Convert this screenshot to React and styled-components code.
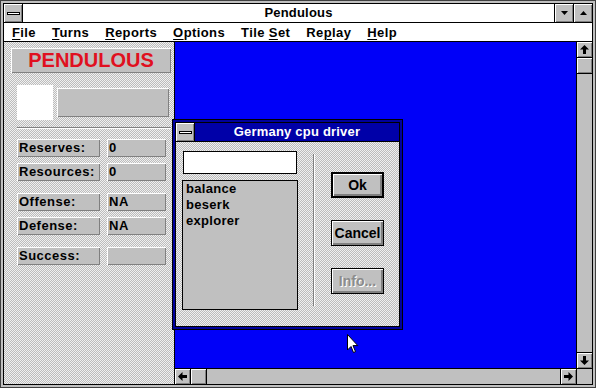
import React from 'react';
import styled, { createGlobalStyle, css } from 'styled-components';

const GlobalStyle = createGlobalStyle`
  html, body { margin: 0; padding: 0; background: #c0c0c0; }
  body { font-family: "Liberation Sans", Arial, sans-serif; }
`;

const dither = css`
  background-color: #c8c8c8;
  background-image: repeating-conic-gradient(#bcbcbc 0 25%, #f0f0f0 0 50%);
  background-size: 2px 2px;
`;

const bevel = css`
  background: #c0c0c0;
  box-shadow: inset 1px 1px #fff, inset -1px -1px #808080;
`;

// Main window
const Frame = styled.div`
  position: relative;
  box-sizing: border-box;
  width: 596px;
  height: 388px;
  border: 1px solid #404040;
  padding: 2px;
  background: #c0c0c0;
  display: flex;
  overflow: hidden;
`;

const Inner = styled.div`
  flex: 1;
  min-width: 0;
  display: flex;
  flex-direction: column;
  border: 1px solid #000;
`;

const TitleBar = styled.div`
  height: 18px;
  flex: none;
  display: flex;
  background: ${p => (p.$active ? '#0000a8' : '#fff')};
  color: ${p => (p.$active ? '#fff' : '#000')};
  border-bottom: 1px solid #000;
  font-weight: bold;
  font-size: 13px;
  letter-spacing: 0.2px;
`;

const SysBox = styled.div`
  width: 18px;
  flex: none;
  border-right: 1px solid #000;
  ${bevel};
  display: flex;
  align-items: center;
  justify-content: center;
  &::after {
    content: '';
    width: 11px;
    height: 1px;
    background: #fff;
    border: 1px solid #000;
  }
`;

const Title = styled.div`
  flex: 1;
  text-align: center;
  line-height: 18px;
  padding-left: ${p => p.$shift || 0}px;
`;

const SizeBtn = styled.div`
  width: 18px;
  flex: none;
  border-left: 1px solid #000;
  ${bevel};
  display: flex;
  align-items: center;
  justify-content: center;
`;

const MenuBar = styled.div`
  height: 18px;
  flex: none;
  display: flex;
  align-items: center;
  background: #fff;
  border-bottom: 1px solid #000;
  font-size: 13px;
  font-weight: bold;
  letter-spacing: 0.4px;
`;

const MenuItem = styled.span`
  padding: 0 8px;
  u { text-decoration-thickness: 1px; text-underline-offset: 2px; }
`;

const Client = styled.div`
  flex: 1;
  min-height: 0;
  display: flex;
`;

// Left info panel
const Panel = styled.div`
  width: 171px;
  flex: none;
  border-right: 1px solid #000;
  ${dither};
  box-sizing: border-box;
  padding: 6px 0 0 7px;
  display: flex;
  flex-direction: column;
`;

const Banner = styled.div`
  width: 160px;
  height: 25px;
  box-sizing: border-box;
  ${bevel};
  color: #e01020;
  font-weight: bold;
  font-size: 20px;
  text-align: center;
  line-height: 25px;
`;

const IconRow = styled.div`
  margin: 12px 0 0 6px;
  display: flex;
  align-items: center;
  gap: 4px;
`;

const WhiteTile = styled.div`
  width: 36px;
  height: 35px;
  background: #fff;
`;

const GrayBar = styled.div`
  width: 112px;
  height: 29px;
  ${bevel};
`;

const Etch = styled.div`
  margin: 7px 0 0 6px;
  width: 154px;
  height: 1px;
  background: #808080;
  border-bottom: 1px solid #fff;
`;

const StatRow = styled.div`
  display: flex;
  gap: 7px;
  margin: ${p => p.$top}px 0 0 6px;
`;

const StatBox = styled.div`
  width: ${p => p.$w}px;
  height: 18px;
  box-sizing: border-box;
  ${bevel};
  font-weight: bold;
  font-size: 13px;
  letter-spacing: 0.5px;
  line-height: 18px;
  padding-left: 2px;
`;

// MDI area
const Mdi = styled.div`
  flex: 1;
  min-width: 0;
  display: grid;
  grid-template-columns: 1fr 16px;
  grid-template-rows: 1fr 16px;
`;

const Desk = styled.div`
  background: #0000f8;
`;

const VScroll = styled.div`
  display: flex;
  flex-direction: column;
  background: #c0c0c0;
  border-left: 1px solid #000;
`;

const HScroll = styled.div`
  display: flex;
  background: #c0c0c0;
  border-top: 1px solid #000;
`;

const Corner = styled.div`
  background: #c0c0c0;
  border-top: 1px solid #000;
  border-left: 1px solid #000;
`;

const Track = styled.div`
  flex: 1;
  background: #c0c0c0;
`;

const ScrollBtn = styled.div`
  width: ${p => (p.$v ? 15 : 16)}px;
  height: ${p => (p.$v ? 16 : 15)}px;
  flex: none;
  box-sizing: border-box;
  ${bevel};
  border: 0 solid #000;
  ${p => css`border-${p.$edge}-width: 1px;`}
  display: flex;
  align-items: center;
  justify-content: center;
`;

// Dialog
const Dialog = styled.div`
  position: absolute;
  left: 171px;
  top: 118px;
  width: 231px;
  height: 211px;
  box-sizing: border-box;
  border: 1px solid #000;
  background: #00009c;
  padding: 2px;
  display: flex;
`;

const DialogInner = styled.div`
  flex: 1;
  display: flex;
  flex-direction: column;
  border: 1px solid #000;
`;

const DialogBody = styled.div`
  flex: 1;
  ${dither};
  display: flex;
  padding: 9px 0 0 6px;
`;

const LeftCol = styled.div`
  width: 116px;
  display: flex;
  flex-direction: column;
  gap: 6px;
`;

const TextInput = styled.div`
  margin: 0 1px;
  height: 23px;
  box-sizing: border-box;
  background: #fff;
  border: 1px solid #000;
`;

const ListBox = styled.div`
  height: 130px;
  box-sizing: border-box;
  background: #c0c0c0;
  border: 1px solid #000;
  padding: 0 3px;
  font-weight: bold;
  font-size: 13px;
  letter-spacing: 0.3px;
  line-height: 16px;
`;

const Separator = styled.div`
  margin: 3px 0 0 15px;
  width: 1px;
  height: 152px;
  background: #808080;
  border-right: 1px solid #fff;
`;

const RightCol = styled.div`
  margin-left: 16px;
  padding-top: 21px;
  display: flex;
  flex-direction: column;
  gap: 22px;
`;

const Button = styled.div`
  width: 53px;
  height: 26px;
  box-sizing: border-box;
  border: ${p => (p.$default ? 2 : 1)}px solid #000;
  background: #c0c0c0;
  box-shadow: inset 1px 1px #fff, inset -2px -2px #808080;
  font-weight: bold;
  font-size: 14px;
  display: flex;
  align-items: center;
  justify-content: center;
  color: ${p => (p.$disabled ? '#8c8c8c' : '#000')};
  text-shadow: ${p => (p.$disabled ? '1px 1px #fff' : 'none')};
`;

const Pointer = styled.svg`
  position: absolute;
  left: 346px;
  top: 333px;
`;

const Arrow = ({ dir }) => {
  const rot = { up: 0, right: 90, down: 180, left: 270 }[dir];
  return (
    <svg width="9" height="9" viewBox="0 0 9 9">
      <path d="M4.5 0 L9 4.5 L6 4.5 L6 9 L3 9 L3 4.5 L0 4.5 Z" fill="#000" transform={`rotate(${rot} 4.5 4.5)`} />
    </svg>
  );
};

const Tri = ({ up }) => (
  <svg width="7" height="4" viewBox="0 0 7 4">
    <path d={up ? 'M0 4 L7 4 L3.5 0 Z' : 'M0 0 L7 0 L3.5 4 Z'} fill="#000" />
  </svg>
);

const menus = [
  ['F', 'ile'],
  ['T', 'urns'],
  ['R', 'eports'],
  ['O', 'ptions'],
  ['Tile ', 'S', 'et'],
  ['Re', 'p', 'lay'],
  ['H', 'elp'],
];

const stats = [
  ['Reserves:', '0', 10],
  ['Resources:', '0', 6],
  ['Offense:', 'NA', 12],
  ['Defense:', 'NA', 6],
  ['Success:', '', 12],
];

function MenuLabel({ parts }) {
  if (parts.length === 3) {
    return <>{parts[0]}<u>{parts[1]}</u>{parts[2]}</>;
  }
  return <><u>{parts[0]}</u>{parts[1]}</>;
}

export default function App() {
  return (
    <>
      <GlobalStyle />
      <Frame>
        <Inner>
          <TitleBar>
            <SysBox />
            <Title $shift={20}>Pendulous</Title>
            <SizeBtn><Tri /></SizeBtn>
            <SizeBtn><Tri up /></SizeBtn>
          </TitleBar>
          <MenuBar>
            {menus.map((m, i) => (
              <MenuItem key={i}><MenuLabel parts={m} /></MenuItem>
            ))}
          </MenuBar>
          <Client>
            <Panel>
              <Banner>PENDULOUS</Banner>
              <IconRow>
                <WhiteTile />
                <GrayBar />
              </IconRow>
              <Etch />
              {stats.map(([label, value, top]) => (
                <StatRow key={label} $top={top}>
                  <StatBox $w={83}>{label}</StatBox>
                  <StatBox $w={59}>{value}</StatBox>
                </StatRow>
              ))}
            </Panel>
            <Mdi>
              <Desk />
              <VScroll>
                <ScrollBtn $v $edge="bottom"><Arrow dir="up" /></ScrollBtn>
                <ScrollBtn $v $edge="bottom" />
                <Track />
                <ScrollBtn $v $edge="top"><Arrow dir="down" /></ScrollBtn>
              </VScroll>
              <HScroll>
                <ScrollBtn $edge="right"><Arrow dir="left" /></ScrollBtn>
                <ScrollBtn $edge="right" />
                <Track />
                <ScrollBtn $edge="left"><Arrow dir="right" /></ScrollBtn>
              </HScroll>
              <Corner />
            </Mdi>
          </Client>
        </Inner>

        <Dialog>
          <DialogInner>
            <TitleBar $active>
              <SysBox />
              <Title>Germany cpu driver</Title>
            </TitleBar>
            <DialogBody>
              <LeftCol>
                <TextInput />
                <ListBox>
                  <div>balance</div>
                  <div>beserk</div>
                  <div>explorer</div>
                </ListBox>
              </LeftCol>
              <Separator />
              <RightCol>
                <Button $default>Ok</Button>
                <Button>Cancel</Button>
                <Button $disabled>Info...</Button>
              </RightCol>
            </DialogBody>
          </DialogInner>
        </Dialog>

        <Pointer width="12" height="20" viewBox="0 0 12 20">
          <path d="M0.5 0.5 L0.5 16 L4 12.5 L6.5 18.5 L8.5 17.6 L6 11.6 L10.8 11.6 Z" fill="#fff" stroke="#000" strokeWidth="1" />
        </Pointer>
      </Frame>
    </>
  );
}
